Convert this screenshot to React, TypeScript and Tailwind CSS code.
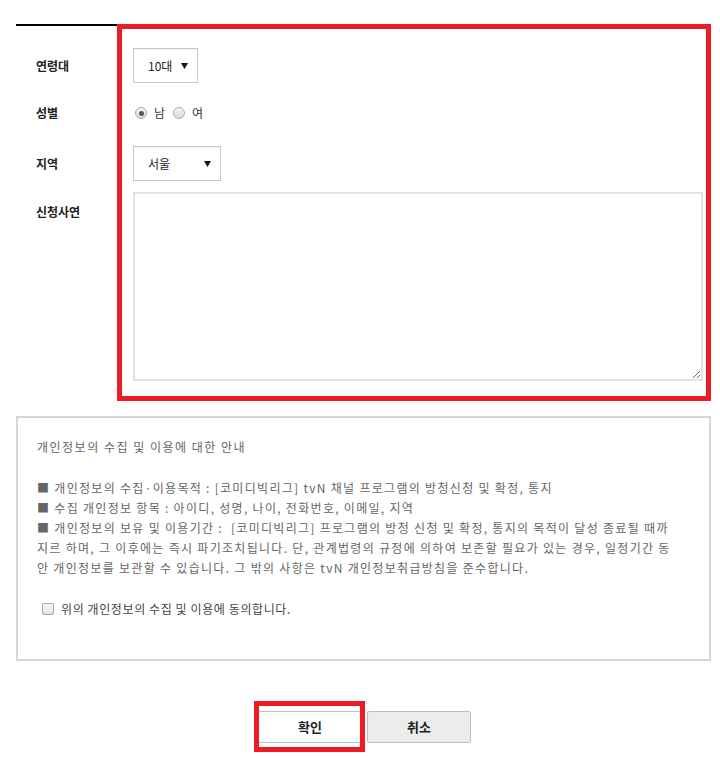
import React, { useState } from 'react';

const FONT = { fontFamily: '"Noto Sans CJK KR", "Noto Sans", sans-serif' };

// 가짜 셀렉트 박스 (네이티브 화살표 대신 작은 삼각형 사용)
function FakeSelect({ value, width }: { value: string; width: string }) {
  return (
    <div
      className={`${width} h-[35px] flex items-center justify-between pl-[14px] pr-[8px] border border-[#c8c8c8] bg-white text-[12px] text-[#222] shadow-[inset_0_1px_1px_rgba(0,0,0,0.05)]`}
    >
      <span>{value}</span>
      <svg width="7" height="6" viewBox="0 0 7 6" className="mr-[1px]">
        <path d="M0 0h7L3.5 6z" fill="#111" />
      </svg>
    </div>
  );
}

function Radio({ checked }: { checked?: boolean }) {
  return (
    <span className="w-[12px] h-[12px] rounded-full border border-[#a9a9a9] bg-gradient-to-b from-[#f4f4f4] to-[#dcdcdc] flex items-center justify-center">
      {checked && <span className="w-[5px] h-[5px] rounded-full bg-[#555]" />}
    </span>
  );
}

export default function App() {
  const [gender] = useState('남');

  return (
    <div className="w-[720px] min-h-[758px] bg-white pt-6 text-[12px]" style={FONT}>
      {/* 신청 폼 영역 */}
      <div className="relative mx-4 w-[695px] border-t-2 border-black pb-[20px]">
        <div className="flex items-center mt-[22px] h-[35px]">
          <div className="w-[117px] pl-5 font-bold text-[#222]">연령대</div>
          <FakeSelect value="10대" width="w-[65px]" />
        </div>

        <div className="flex items-center mt-[18px] h-[24px]">
          <div className="w-[117px] pl-5 font-bold text-[#222]">성별</div>
          <div className="flex items-center pl-[2px] text-[#333]">
            <Radio checked={gender === '남'} />
            <span className="ml-[7px]">남</span>
            <span className="ml-[8px]"><Radio checked={gender === '여'} /></span>
            <span className="ml-[7px]">여</span>
          </div>
        </div>

        <div className="flex items-center mt-[21px] h-[35px]">
          <div className="w-[117px] pl-5 font-bold text-[#222]">지역</div>
          <FakeSelect value="서울" width="w-[88px]" />
        </div>

        <div className="flex items-start mt-[11px]">
          <div className="w-[117px] pl-5 pt-[11px] font-bold text-[#222]">신청사연</div>
          <textarea className="w-[570px] h-[189px] border-2 border-[#e2e2e2] bg-white outline-none" />
        </div>

        {/* 빨간 강조 박스 (주석 오버레이) */}
        <div className="pointer-events-none absolute left-[101px] top-[-2px] w-[594px] h-[377px] border-[5px] border-[#ed1c24]" />
      </div>

      {/* 개인정보 안내 */}
      <div className="mx-4 mt-[15px] w-[695px] h-[245px] border-2 border-[#d6d6d6] pl-[19px] pt-[19px] text-[#666]">
        <p className="leading-[20px] text-[#666] tracking-[1.5px]">개인정보의 수집 및 이용에 대한 안내</p>
        <div className="mt-[21px] leading-[20px] whitespace-nowrap tracking-[1.3px]">
          <p><span className="text-[#666]">■</span> 개인정보의 수집·이용목적 : [코미디빅리그] tvN 채널 프로그램의 방청신청 및 확정, 통지</p>
          <p><span className="text-[#666]">■</span> 수집 개인정보 항목 : 아이디, 성명, 나이, 전화번호, 이메일, 지역</p>
          <p>
            <span className="text-[#666]">■</span> 개인정보의 보유 및 이용기간 :&nbsp; [코미디빅리그] 프로그램의 방청 신청 및 확정, 통지의 목적이 달성 종료될 때까
            <br />
            지르 하며, 그 이후에는 즉시 파기조치됩니다. 단, 관계법령의 규정에 의하여 보존할 필요가 있는 경우, 일정기간 동
            <br />
            안 개인정보를 보관할 수 있습니다. 그 밖의 사항은 tvN 개인정보취급방침을 준수합니다.
          </p>
        </div>
        <label className="mt-[21px] flex items-center h-[20px] pl-[5px]">
          <span className="w-[12px] h-[12px] rounded-[2px] border border-[#a9a9a9] bg-gradient-to-b from-[#f8f8f8] to-[#e0e0e0]" />
          <span className="ml-[7px] text-[#444] tracking-[0.6px]">위의 개인정보의 수집 및 이용에 동의합니다.</span>
        </label>
      </div>

      {/* 버튼 */}
      <div className="mt-[50px] flex justify-center gap-[5px] pl-[9px]">
        <div className="relative">
          <button className="w-[104px] h-[32px] border border-[#bdbdbd] bg-white rounded-[2px] font-bold text-[13px] text-[#222]">
            확인
          </button>
          <div className="pointer-events-none absolute left-[-4px] top-[-10px] w-[111px] h-[51px] border-[5px] border-[#ed1c24]" />
        </div>
        <button className="w-[104px] h-[32px] border border-[#bdbdbd] bg-[#ececec] rounded-[2px] font-bold text-[13px] text-[#222]">
          취소
        </button>
      </div>
    </div>
  );
}
